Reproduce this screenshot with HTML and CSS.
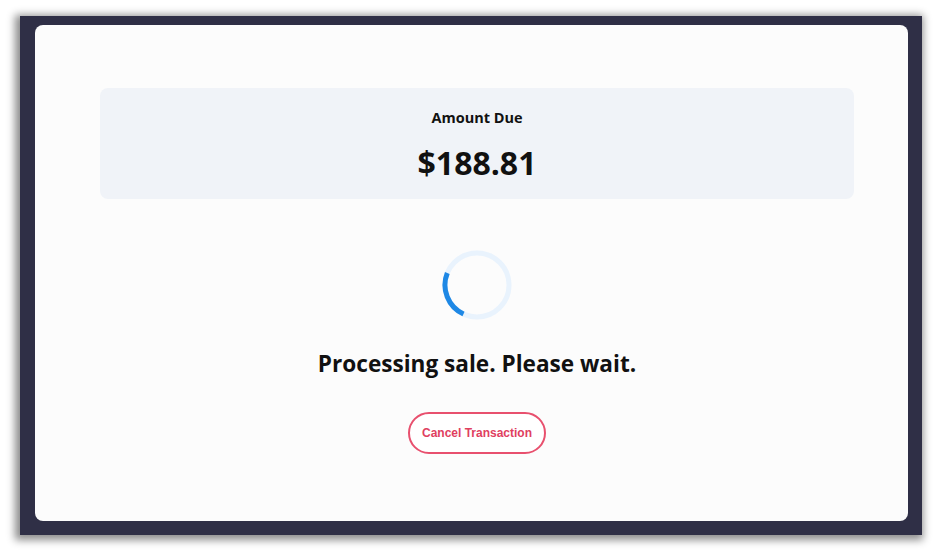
FILE: index.html
```html
<!DOCTYPE html>
<html lang="en">

<head>
  <meta charset="UTF-8" />
  <meta name="viewport" content="width=device-width, initial-scale=1.0" />
  <title>Processing Sale</title>
  <link rel="stylesheet" href="styles.css">
</head>

<body>
  <section class="frame">
    <div class="card">
      <div class="amount">
        <h2>Amount Due</h2>
        <p class="total">$188.81</p>
      </div>
      <svg class="spinner" width="70" height="70" viewBox="0 0 70 70">
        <circle cx="35" cy="35" r="32" fill="none" stroke="#e9f3fd" stroke-width="5" />
        <path d="M5.3 23 A32 32 0 0 0 21.5 64" fill="none" stroke="#1e88e5" stroke-width="5" />
      </svg>
      <h1 class="status">Processing sale. Please wait.</h1>
      <button class="cancel">Cancel Transaction</button>
    </div>
  </section>
</body>

</html>
```

FILE: styles.css
```css
/* Reset some default styles */
* {
    margin: 0;
    padding: 0;
    box-sizing: border-box;
}

body {
    background-color: #ffffff;
    font-family: "Open Sans", "Noto Sans", sans-serif;
    color: #111;
    padding-bottom: 17px;
}

/* Dark terminal frame */
.frame {
    margin: 16px 20px 0 20px;
    height: 519px;
    padding: 9px 14px 14px 15px;
    background-color: #2f2f46;
    box-shadow: -2px 2px 8px 3px rgba(0, 0, 0, 0.45);
}

/* Main white card */
.card {
    height: 100%;
    background-color: #fcfcfc;
    border-radius: 8px;
    padding: 63px 54px 0 65px;
    display: flex;
    flex-direction: column;
    align-items: center;
}

/* Amount due box */
.amount {
    width: 100%;
    height: 111px;
    background-color: #f0f3f8;
    border-radius: 8px;
    display: flex;
    flex-direction: column;
    align-items: center;
    padding-top: 19px;
}

.amount h2 {
    font-size: 14.5px;
    font-weight: 700;
    line-height: 22px;
}

.total {
    margin-top: 14px;
    font-size: 32px;
    font-weight: 700;
    line-height: 40px;
}

/* Loading spinner */
.spinner {
    margin-top: 51px;
    display: block;
}

.status {
    margin-top: 28px;
    font-size: 22.6px;
    font-weight: 700;
    line-height: 32px;
}

/* Cancel button */
.cancel {
    margin-top: 32px;
    width: 138px;
    height: 42px;
    border: 2px solid #e8506e;
    border-radius: 21px;
    background-color: #fff;
    color: #e0405f;
    font-family: "Liberation Sans", Arial, sans-serif;
    font-size: 12px;
    font-weight: 700;
    cursor: pointer;
}
```
